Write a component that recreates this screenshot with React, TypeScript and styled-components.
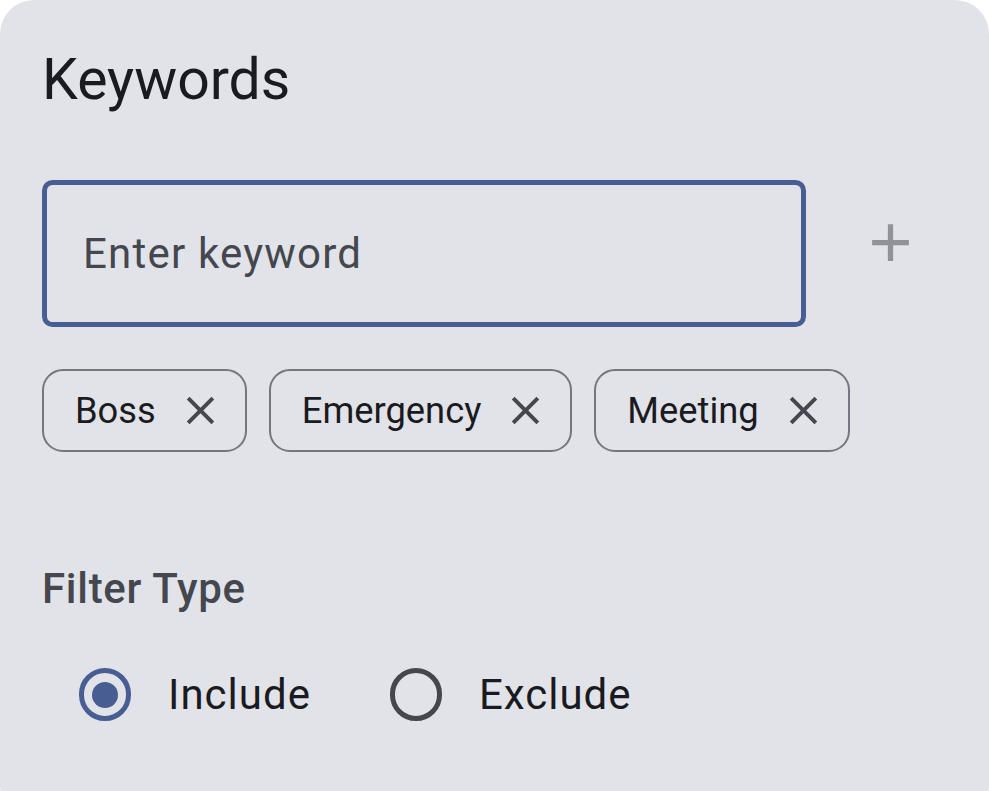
import React, { useState } from "react";
import styled, { createGlobalStyle } from "styled-components";

const GlobalStyle = createGlobalStyle`
  html, body {
    margin: 0;
    padding: 0;
    background: #ffffff;
    overflow: hidden;
  }
  body {
    font-family: Roboto, "Noto Sans", "Liberation Sans", sans-serif;
  }
`;

// colours of the card (material 3 blue scheme)
const primary = "#485e92";
const onSurface = "#1a1b20";
const onSurfaceVariant = "#44474e";
const outline = "#74777f";

const Card = styled.div`
  box-sizing: border-box;
  width: 989px;
  height: 820px;
  background: #e2e2e9;
  border-radius: 34px;
  padding: 43px 36px 0 42px;
`;

const Title = styled.h2`
  margin: 0;
  font-size: 57.2px;
  line-height: 73.5px;
  font-weight: 400;
  color: ${onSurface};
`;

const InputRow = styled.div`
  display: flex;
  align-items: center;
  gap: 21px;
  margin-top: 42px;
`;

const FieldSlot = styled.div`
  flex: 1;
  padding-top: 21px;
`;

const Field = styled.input`
  box-sizing: border-box;
  display: block;
  width: 100%;
  height: 147px;
  margin: 0;
  padding: 0 36px;
  border: 5.25px solid ${primary};
  border-radius: 10.5px;
  background: transparent;
  outline: none;
  font-family: inherit;
  font-size: 42px;
  letter-spacing: 1.2px;
  color: ${onSurface};

  &::placeholder {
    color: ${onSurfaceVariant};
    opacity: 1;
  }
`;

const IconButton = styled.button`
  flex: none;
  width: 126px;
  height: 126px;
  display: flex;
  align-items: center;
  justify-content: center;
  padding: 0;
  border: none;
  border-radius: 50%;
  background: none;
  color: rgba(26, 27, 32, 0.4);
  cursor: default;
`;

const ChipRow = styled.div`
  display: flex;
  gap: 22px;
  margin-top: 42px;
`;

const Chip = styled.div`
  box-sizing: border-box;
  display: inline-flex;
  align-items: center;
  gap: 21px;
  height: 83px;
  padding: 0 21px 0 31px;
  border: 2.6px solid ${outline};
  border-radius: 21px;
  font-size: 36.3px;
  letter-spacing: 0;
  color: ${onSurface};
`;

const ChipClose = styled.span`
  display: flex;
  width: 47px;
  height: 47px;
  color: ${onSurfaceVariant};
`;

const SectionLabel = styled.div`
  margin-top: 105px;
  font-size: 42px;
  line-height: 63px;
  font-weight: 500;
  letter-spacing: 0.7px;
  color: ${onSurfaceVariant};
`;

const RadioGroup = styled.div`
  display: flex;
  align-items: center;
  gap: 42px;
  margin-top: 12px;
`;

const Option = styled.label`
  display: flex;
  align-items: center;
  font-size: 42px;
  line-height: 63px;
  letter-spacing: 1px;
  color: ${onSurface};
`;

const RadioTarget = styled.span`
  width: 126px;
  height: 126px;
  display: flex;
  align-items: center;
  justify-content: center;
`;

const Ring = styled.span<{ $on: boolean }>`
  box-sizing: border-box;
  width: 52.5px;
  height: 52.5px;
  border-radius: 50%;
  border: 5.25px solid ${(p) => (p.$on ? primary : onSurfaceVariant)};
  display: flex;
  align-items: center;
  justify-content: center;
`;

const Dot = styled.span`
  width: 26px;
  height: 26px;
  border-radius: 50%;
  background: ${primary};
`;

const CloseIcon = () => (
  <svg width="100%" height="100%" viewBox="0 0 24 24" fill="currentColor">
    <path d="M19 6.41L17.59 5 12 10.59 6.41 5 5 6.41 10.59 12 5 17.59 6.41 19 12 13.41 17.59 19 19 17.59 13.41 12z" />
  </svg>
);

const AddIcon = () => (
  <svg width="63" height="63" viewBox="0 0 24 24" fill="currentColor">
    <path d="M19 13h-6v6h-2v-6H5v-2h6V5h2v6h6v2z" />
  </svg>
);

const App: React.FC = () => {
  const [keywords, setKeywords] = useState<string[]>(["Boss", "Emergency", "Meeting"]);
  const [draft, setDraft] = useState("");
  const [mode, setMode] = useState<"include" | "exclude">("include");

  const addKeyword = () => {
    if (!draft.trim()) return;
    setKeywords([...keywords, draft.trim()]);
    setDraft("");
  };

  return (
    <>
      <GlobalStyle />
      <Card>
        <Title>Keywords</Title>
        <InputRow>
          <FieldSlot>
            <Field
              placeholder="Enter keyword"
              value={draft}
              onChange={(e) => setDraft(e.target.value)}
            />
          </FieldSlot>
          <IconButton onClick={addKeyword} aria-label="Add keyword">
            <AddIcon />
          </IconButton>
        </InputRow>
        <ChipRow>
          {keywords.map((k) => (
            <Chip key={k}>
              {k}
              <ChipClose onClick={() => setKeywords(keywords.filter((x) => x !== k))}>
                <CloseIcon />
              </ChipClose>
            </Chip>
          ))}
        </ChipRow>
        <SectionLabel>Filter Type</SectionLabel>
        <RadioGroup>
          <Option onClick={() => setMode("include")}>
            <RadioTarget>
              <Ring $on={mode === "include"}>{mode === "include" && <Dot />}</Ring>
            </RadioTarget>
            Include
          </Option>
          <Option onClick={() => setMode("exclude")}>
            <RadioTarget>
              <Ring $on={mode === "exclude"}>{mode === "exclude" && <Dot />}</Ring>
            </RadioTarget>
            Exclude
          </Option>
        </RadioGroup>
      </Card>
    </>
  );
};

export default App;
